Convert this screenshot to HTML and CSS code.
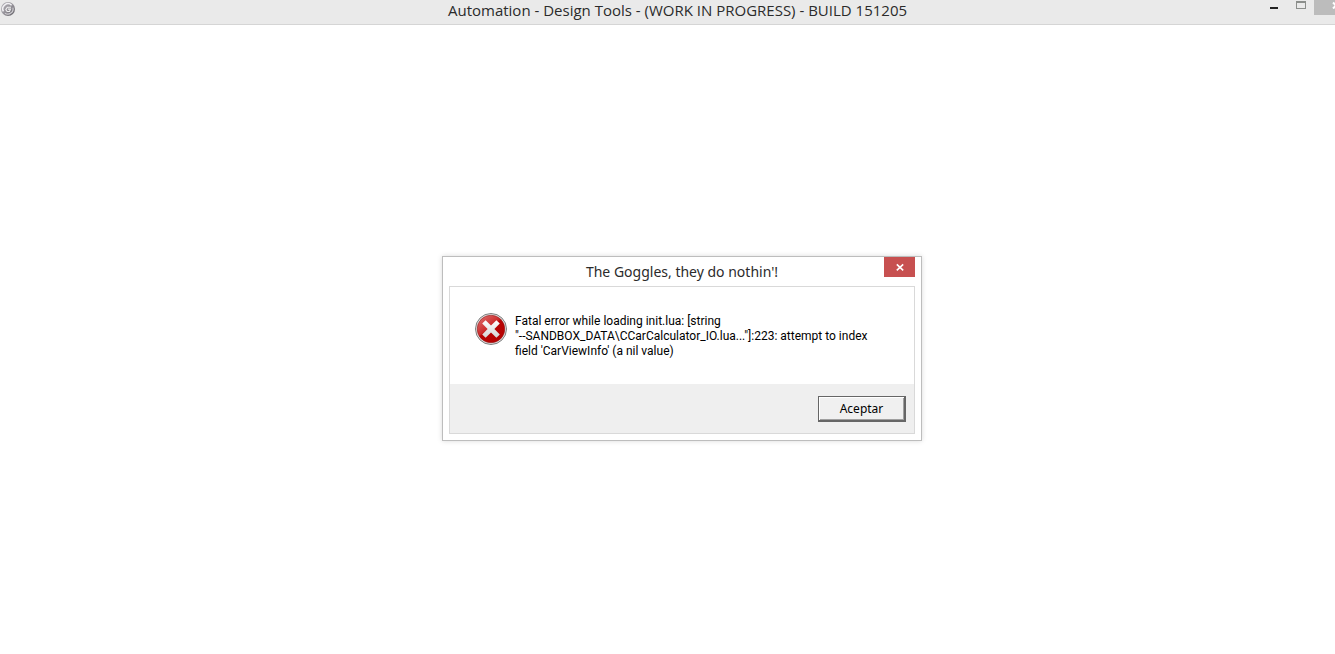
FILE: index.html
```
<!DOCTYPE html>
<html lang="es">
<head>
    <meta charset="UTF-8">
    <meta name="viewport" content="width=device-width, initial-scale=1.0">
    <title>Automation</title>
    <link rel="stylesheet" href="styles.css">
</head>
<body>
    <header class="titlebar">
        <svg class="app-icon" width="16" height="18" viewBox="0 0 16 18">
            <defs>
                <linearGradient id="metal" x1="0" y1="0" x2="1" y2="1">
                    <stop offset="0" stop-color="#b4b4b8"/>
                    <stop offset="0.5" stop-color="#97949b"/>
                    <stop offset="1" stop-color="#5c5a60"/>
                </linearGradient>
            </defs>
            <circle cx="8" cy="9" r="7" fill="url(#metal)"/>
            <path d="M3.4 11.4A5.2 5.2 0 0 1 11.6 5.2" fill="none" stroke="#f1f0f3" stroke-width="1.6"/>
            <path d="M12.9 7.6A5.2 5.2 0 0 1 5 13.2" fill="none" stroke="#cfcdd2" stroke-width="1.2"/>
            <path d="M11 7.2H7.4L5.8 9.6l1.3 1.9h2.4l1-2.4H8" fill="none" stroke="#eeeeee" stroke-width="1.1"/>
        </svg>
        <h1 class="title">Automation - Design Tools - (WORK IN PROGRESS) - BUILD 151205</h1>
        <div class="controls">
            <button class="control" type="button" aria-label="Minimizar">
                <svg width="9" height="9" viewBox="0 0 9 9"><path d="M1 6h8v2H1z" fill="#222"/></svg>
            </button>
            <button class="control" type="button" aria-label="Maximizar">
                <svg width="10" height="8" viewBox="0 0 10 8"><path d="M0 0h10v8H0zM1 2v5h8V2z" fill="#8c8f8c" fill-rule="evenodd"/></svg>
            </button>
            <button class="control control-close" type="button" aria-label="Cerrar">
                <svg width="8" height="8" viewBox="0 0 8 8"><path d="M1 1.5l6 6M7 1.5l-6 6" stroke="#fff" stroke-width="2"/></svg>
            </button>
        </div>
    </header>
    <main class="desktop">
        <section class="dialog" role="alertdialog" aria-labelledby="dialog-title" aria-describedby="dialog-text">
            <div class="dialog-head">
                <h2 class="title" id="dialog-title">The Goggles, they do nothin'!</h2>
                <button class="dialog-close" type="button" aria-label="Cerrar">
                    <svg width="8" height="8" viewBox="0 0 8 8"><path d="M0.8 1.3l6.4 6M7.2 1.3l-6.4 6" stroke="#fff" stroke-width="1.6"/></svg>
                </button>
            </div>
            <div class="dialog-frame">
                <div class="message">
                    <svg class="error-icon" width="32" height="32" viewBox="0 0 32 32">
                        <defs>
                            <linearGradient id="red" x1="0" y1="0" x2="0.8" y2="1">
                                <stop offset="0" stop-color="#e07777"/>
                                <stop offset="0.48" stop-color="#cc2a2a"/>
                                <stop offset="0.52" stop-color="#b80505"/>
                                <stop offset="1" stop-color="#b60000"/>
                            </linearGradient>
                            <linearGradient id="cross" x1="0" y1="0" x2="0" y2="1">
                                <stop offset="0" stop-color="#ffffff"/>
                                <stop offset="1" stop-color="#d4d4d4"/>
                            </linearGradient>
                        </defs>
                        <circle cx="16" cy="16" r="15.5" fill="#e6e6e6" stroke="#7c7c7c"/>
                        <circle cx="16" cy="16" r="13.8" fill="url(#red)" stroke="#8f1a1a" stroke-width="0.6"/>
                        <path d="M10.6 7.2L16 12.6l5.4-5.4 3.4 3.4L19.4 16l5.4 5.4-3.4 3.4L16 19.4l-5.4 5.4-3.4-3.4L12.6 16l-5.4-5.4z" fill="url(#cross)"/>
                    </svg>
                    <p class="text" id="dialog-text">Fatal error while loading init.lua: [string<br>"--SANDBOX_DATA\CCarCalculator_IO.lua..."]:223: attempt to index<br>field 'CarViewInfo' (a nil value)</p>
                </div>
                <div class="actions">
                    <button class="accept" type="button">Aceptar</button>
                </div>
            </div>
        </section>
    </main>
</body>
</html>
```
FILE: styles.css
```
*{
    margin: 0;
    padding: 0;
    box-sizing: border-box;
}
body{
    display: flex;
    flex-direction: column;
    min-height: 100vh;
    background-color: #fff;
    font-family: "Noto Sans", "Open Sans", sans-serif;
    overflow: hidden;
}
svg{
    display: block;
}
button{
    border: 0;
    background: none;
    font-family: inherit;
}
.titlebar{
    display: grid;
    grid-template-columns: 20px 1fr auto;
    height: 25px;
    background-color: #eaeaea;
    border-bottom: 1px solid #d5d5d5;
}
.app-icon{
    grid-area: 1 / 1;
}
.title{
    font-size: 14px;
    font-weight: 400;
    line-height: 20px;
    text-align: center;
    color: #2b2b2b;
}
.titlebar .title{
    grid-area: 1 / 2 / 2 / 4;
    font-family: "Open Sans", sans-serif;
    font-size: 15px;
}
.controls{
    grid-area: 1 / 3;
    display: flex;
    align-items: flex-start;
}
.control{
    display: flex;
    justify-content: center;
    width: 27px;
    height: 15px;
    padding-top: 1px;
}
.control-close{
    width: 21px;
    justify-content: flex-start;
    padding-left: 18px;
    background-color: #bcbcbc;
    overflow: hidden;
}
.control-close svg{
    flex: none;
}
.desktop{
    flex: 1;
    display: flex;
    justify-content: center;
    align-items: center;
    padding: 18px 0 0 29px;
}
.dialog{
    width: 480px;
    padding: 0 6px 6px;
    border: 1px solid #bdbdbd;
    background-color: #fff;
    box-shadow: 0 0 5px rgba(0, 0, 0, 0.15);
}
.dialog-head{
    display: grid;
    height: 29px;
}
.dialog-head .title{
    grid-area: 1 / 1;
    padding-top: 5px;
}
.dialog-close{
    grid-area: 1 / 1;
    justify-self: end;
    display: flex;
    justify-content: center;
    align-items: center;
    width: 31px;
    height: 20px;
    background-color: #c75050;
}
.dialog-frame{
    border: 1px solid #d9d9d9;
}
.message{
    display: flex;
    gap: 8px;
    padding: 26px 25px 25px;
}
.error-icon{
    flex: none;
}
.text{
    padding-top: 1px;
    font-family: Roboto, "Open Sans", sans-serif;
    font-size: 12px;
    line-height: 15px;
    color: #000;
}
.actions{
    display: flex;
    justify-content: flex-end;
    padding: 12px 8px 11px;
    background-color: #efefef;
}
.accept{
    width: 88px;
    height: 26px;
    border: 1px solid #666;
    border-width: 1px 2px 2px 1px;
    background-color: #f0f0f0;
    box-shadow: inset 1px 1px #fff, inset -1px -1px #a0a0a0;
    font-size: 12px;
    color: #000;
}
```
